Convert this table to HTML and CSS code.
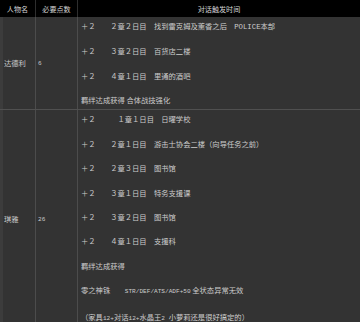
FILE: index.html
```html
<!DOCTYPE html>
<html lang="zh-CN">
<head>
<meta charset="utf-8">
<title>对话触发时间</title>
<link rel="stylesheet" href="styles.css">
</head>
<body>
<div class="sheet">
  <div class="row head">
    <div class="cell">人物名</div>
    <div class="cell">必要点数</div>
    <div class="cell">对话触发时间</div>
  </div>
  <div class="row sec">
    <div class="cell name">达德利</div>
    <div class="cell pts">6</div>
    <div class="cell time">＋２　　２章２日目　找到雷克姆及薰香之后　<span class="lat">POLICE</span>本部<br><br>＋２　　３章２日目　百货店二楼<br><br>＋２　　４章１日目　里通的酒吧<br><br>羁绊达成获得 合体战技强化</div>
  </div>
  <div class="row sec">
    <div class="cell name">琪雅</div>
    <div class="cell pts">26</div>
    <div class="cell time">＋２　　　１章１日目　日曜学校<br><br>＋２　　２章１日目　游击士协会二楼（向导任务之前）<br><br>＋２　　２章３日目　图书馆<br><br>＋２　　３章１日目　特务支援课<br><br>＋２　　３章２日目　图书馆<br><br>＋２　　４章１日目　支援科<br><br>羁绊达成获得<br><br>零之神铢　　<span class="mono">STR/DEF/ATS/ADF+50</span> 全状态异常无效<br><br>（家具<span class="mono">12+</span>对话<span class="mono">12+</span>水晶王<span class="mono">2 </span>小萝莉还是很好搞定的）</div>
  </div>
</div>
</body>
</html>
```

FILE: styles.css
```css
html, body {
  margin: 0;
  padding: 0;
  background: #333333;
  overflow: hidden;
}

.sheet {
  width: 360px;
  font-family: "Noto Sans CJK SC", "Noto Sans", sans-serif;
  font-size: 7.3px;
  color: #cdcdcd;
}

.row {
  display: grid;
  grid-template-columns: 36px 42px 1fr;
}

.cell {
  box-sizing: border-box;
}

.head {
  background: #000000;
  height: 17px;
}

.head .cell {
  display: flex;
  align-items: center;
  justify-content: center;
  color: #d4d4d4;
  font-size: 7.1px;
}

.head .cell:nth-child(-n+2) {
  border-right: 1px solid #2e2e2e;
}

.sec {
  background: #333333;
  border-bottom: 1px solid #505050;
}

.sec .cell:nth-child(-n+2) {
  border-right: 1px solid #4c4c4c;
}

.name {
  display: flex;
  align-items: center;
  border-left: 3px solid #3c3c3c;
  padding-left: 1px;
}

.pts {
  display: flex;
  align-items: center;
  padding-left: 2px;
  font-family: "Liberation Mono", monospace;
  font-size: 6.1px;
}

.time {
  padding: 3px 3px;
  line-height: 12.2px;
  white-space: nowrap;
}

.mono {
  font-family: "Liberation Mono", monospace;
  font-size: 6.1px;
}

.lat {
  font-family: "Liberation Mono", monospace;
  font-size: 7.3px;
}
```
